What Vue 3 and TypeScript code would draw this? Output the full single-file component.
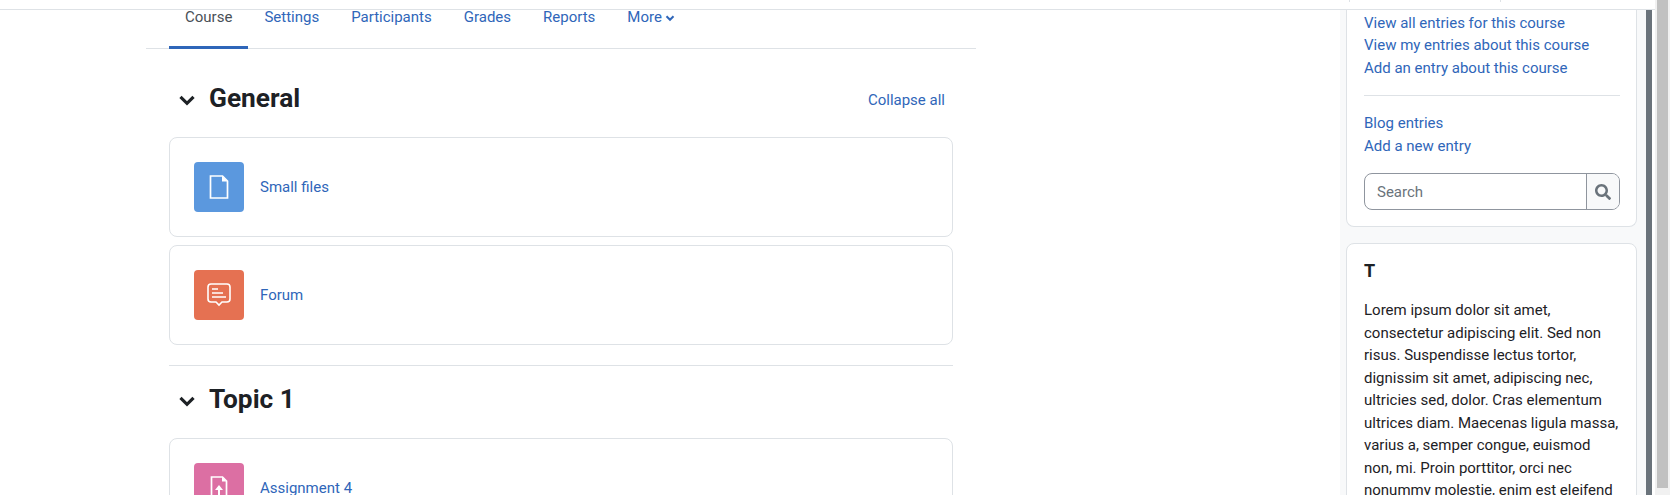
<script setup lang="ts">
const tabs = ['Course', 'Settings', 'Participants', 'Grades', 'Reports']
const blogLinks = ['View all entries for this course', 'View my entries about this course', 'Add an entry about this course']
const entryLinks = ['Blog entries', 'Add a new entry']
const lorem = 'Lorem ipsum dolor sit amet, consectetur adipiscing elit. Sed non risus. Suspendisse lectus tortor, dignissim sit amet, adipiscing nec, ultricies sed, dolor. Cras elementum ultrices diam. Maecenas ligula massa, varius a, semper congue, euismod non, mi. Proin porttitor, orci nec nonummy molestie, enim est eleifend mi, non fermentum diam nisl sit amet erat.'
</script>

<template>
  <div class="page">
    <div class="viewport">
      <header class="topbar"><span class="tick"></span></header>
      <div class="body">
        <main class="main">
          <nav class="tabs">
            <a v-for="(t, i) in tabs" :key="t" class="tab" :class="{ active: i === 0 }">{{ t }}</a>
            <a class="tab">More
              <svg class="more-caret" viewBox="0 0 10 10"><path d="M1.5 3.200 5 6.800l3.500-3.600" fill="none" stroke="currentColor" stroke-width="2"/></svg>
            </a>
          </nav>
          <section class="course">
            <div class="sec-head first">
              <svg class="chev" viewBox="0 0 16 16"><path d="M2.200 5.200 8 11l5.800-5.800" fill="none" stroke="currentColor" stroke-width="2.800"/></svg>
              <h3>General</h3>
              <a class="collapse">Collapse all</a>
            </div>
            <div class="activity">
              <div class="icon blue">
                <svg viewBox="0 0 24 24" width="24" height="24"><path d="M3.500 1h12l5 5v17h-17z" fill="none" stroke="#fff" stroke-width="1.700"/><path d="M15 1l5.500 5.500H15z" fill="#fff"/></svg>
              </div>
              <a>Small files</a>
            </div>
            <div class="activity">
              <div class="icon orange">
                <svg viewBox="0 0 24 24" width="24" height="24"><path d="M4 1h16a3 3 0 0 1 3 3v12a3 3 0 0 1-3 3h-5l-3 3-3-3H4a3 3 0 0 1-3-3V4a3 3 0 0 1 3-3z" fill="none" stroke="#fff" stroke-width="1.600"/><path d="M5 6h6M5 10h11M5 14h14" stroke="#fff" stroke-width="1.500"/></svg>
              </div>
              <a>Forum</a>
            </div>
            <div class="sec-head topic">
              <svg class="chev" viewBox="0 0 16 16"><path d="M2.200 5.200 8 11l5.800-5.800" fill="none" stroke="currentColor" stroke-width="2.800"/></svg>
              <h3>Topic 1</h3>
            </div>
            <div class="activity">
              <div class="icon pink">
                <svg viewBox="0 0 24 24" width="24" height="24"><path d="M4.500 1h11l4 4v18h-15z" fill="none" stroke="#fff" stroke-width="1.700"/><path d="M15 1l4.500 4.500H15z" fill="#fff"/><path d="M12 9l4 5h-3v6h-2v-6H8z" fill="#fff"/></svg>
              </div>
              <a>Assignment 4</a>
            </div>
          </section>
        </main>
        <aside class="drawer">
          <div class="card blog">
            <a v-for="l in blogLinks" :key="l" class="link">{{ l }}</a>
            <hr />
            <a v-for="l in entryLinks" :key="l" class="link">{{ l }}</a>
            <div class="search">
              <span class="placeholder">Search</span>
              <span class="search-btn">
                <svg viewBox="0 0 512 512" width="16" height="16"><path fill="#6a737b" d="M505 442.700 405.300 343c-4.500-4.500-10.600-7-17-7H372c27.600-35.300 44-79.700 44-128C416 93.100 322.900 0 208 0S0 93.100 0 208s93.100 208 208 208c48.300 0 92.700-16.400 128-44v16.300c0 6.400 2.500 12.500 7 17l99.700 99.700c9.400 9.400 24.600 9.400 33.900 0l28.300-28.300c9.400-9.400 9.400-24.600.1-34zM208 336c-70.700 0-128-57.200-128-128 0-70.700 57.200-128 128-128 70.700 0 128 57.200 128 128 0 70.700-57.200 128-128 128z"/></svg>
              </span>
            </div>
          </div>
          <div class="card text">
            <h5>T</h5>
            <p>{{ lorem }}</p>
          </div>
        </aside>
        <div class="inner-scroll"></div>
      </div>
    </div>
    <div class="outer-scroll"><div class="thumb"></div></div>
  </div>
</template>

<style>
html, body { margin: 0; background: #fff; overflow: hidden; }
</style>

<style scoped>
.page {
  display: flex;
  width: 1670px;
  height: 495px;
  overflow: hidden;
  font-family: Roboto, "Liberation Sans", sans-serif;
  font-size: 15px;
  line-height: 22.5px;
  color: #1d2125;
}
a { color: #2f66b9; text-decoration: none; }
.viewport { width: 1655px; display: flex; flex-direction: column; }
.topbar { height: 9px; flex: none; box-sizing: content-box; background: #fff; border-bottom: 1px solid #dee2e6; padding-left: 1349px; }
.tick { display: block; width: 150px; height: 2px; border-left: 1px solid #dee2e6; border-right: 1px solid #dee2e6; }
.body { flex: 1; min-height: 0; display: flex; }
.main { flex: 1; min-width: 0; padding-left: 146px; }
.tabs {
  width: 830px;
  height: 39px;
  box-sizing: border-box;
  display: flex;
  padding-left: 23px;
  border-bottom: 1px solid #dee2e6;
}
.tab { height: 39px; box-sizing: border-box; padding: 0 16px; line-height: 15px; white-space: nowrap; }
.tab.active { color: #495057; border-bottom: 3px solid #2f66b9; }
.more-caret { width: 10px; height: 10px; vertical-align: -1px; margin-left: -1px; }
.course { width: 784px; margin-left: 23px; }
.sec-head { display: flex; align-items: center; color: #1d2125; }
.sec-head.first { height: 42px; margin-top: 28px; margin-bottom: 18px; }
.sec-head.topic { height: 73px; box-sizing: border-box; border-top: 1px solid #dee2e6; margin-top: 20px; padding-bottom: 7px; }
h3 { margin: 0; font-size: 26.25px; line-height: 32px; font-weight: 700; }
.chev { width: 18px; height: 18px; margin: 4px 13px 0 9px; flex: none; }
.collapse { margin: 4px 8px 0 auto; }
.activity {
  height: 100px;
  box-sizing: border-box;
  display: flex;
  align-items: center;
  gap: 16px;
  padding: 0 24px;
  border: 1px solid #dee2e6;
  border-radius: 8px;
  margin-bottom: 8px;
}
.icon {
  width: 50px;
  height: 50px;
  border-radius: 4px;
  display: flex;
  align-items: center;
  justify-content: center;
  flex: none;
}
.blue { background: #5b98de; }
.orange { background: #e57152; }
.pink { background: #dc6fa3; }
.drawer {
  width: 306px;
  flex: none;
  box-sizing: border-box;
  padding: 0 9px 0 6px;
  background: #f8f9fa;
}
.card {
  background: #fff;
  border: 1px solid #dee2e6;
  border-radius: 8px;
  padding: 0 16px 0 17px;
}
.card.blog {
  height: 217px;
  box-sizing: border-box;
  border-top: 0;
  border-radius: 0 0 8px 8px;
  margin-bottom: 16px;
  padding-top: 1.75px;
  display: flex;
  flex-direction: column;
  align-items: flex-start;
}
.link { display: block; }
hr { width: 100%; box-sizing: border-box; margin: 15.25px 0 16.5px; border: 0; border-top: 1px solid #dee2e6; }
.search {
  width: 100%;
  height: 37px;
  box-sizing: border-box;
  margin-top: 16px;
  display: flex;
  border: 1px solid #8f959e;
  border-radius: 8px;
  overflow: hidden;
}
.placeholder { flex: 1; padding-left: 12px; line-height: 36px; color: #6a737b; }
.search-btn {
  width: 32px;
  flex: none;
  background: #f8f9fa;
  border-left: 1px solid #8f959e;
  display: flex;
  align-items: center;
  justify-content: center;
}
.card.text { padding-top: 16px; }
h5 { margin: 0 0 17px; font-size: 18px; line-height: 22px; font-weight: 700; }
p { margin: 0; }
.inner-scroll { width: 6px; flex: none; background: #6a737b; }
.body::after { content: ""; width: 3px; flex: none; background: #fff; }
.outer-scroll { flex: 1; background: #f1f1f1; padding: 0 2px 7px; box-sizing: border-box; }
.thumb { height: 100%; background: #c1c1c1; }
</style>
